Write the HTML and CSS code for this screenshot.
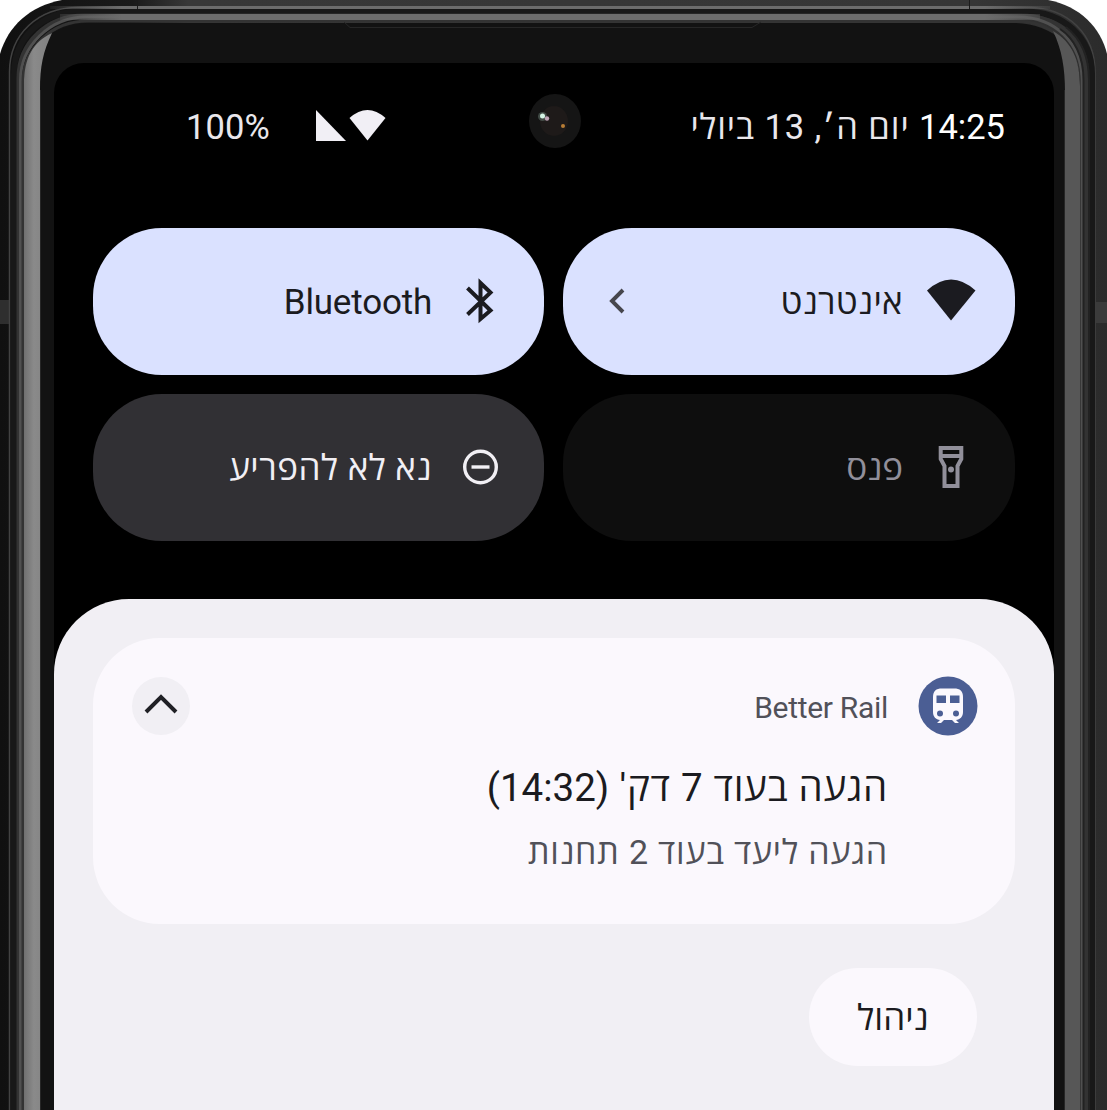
FILE: index.html
```html
<!DOCTYPE html>
<html lang="he" dir="rtl">
<head>
<meta charset="utf-8">
<title>Better Rail</title>
<link rel="stylesheet" href="styles.css">
</head>
<body>
<main class="phone">
  <svg class="frame" viewBox="0 0 1107 1110" aria-hidden="true">
    <defs>
      <linearGradient id="shineLeft" x1="0" x2="1" y1="0" y2="0"><stop offset="0" stop-color="#707070"/><stop offset=".35" stop-color="#8a8a8a"/><stop offset="1" stop-color="#808080"/></linearGradient>
      <linearGradient id="rim" x1="0" x2="1107" y1="0" y2="0" gradientUnits="userSpaceOnUse"><stop offset="0" stop-color="#101010"/><stop offset=".12" stop-color="#1a1a1a"/><stop offset=".17" stop-color="#383838"/><stop offset=".88" stop-color="#363636"/><stop offset="1" stop-color="#2b2b2b"/></linearGradient>
      <linearGradient id="edge" x1="40" x2="1067" y1="0" y2="0" gradientUnits="userSpaceOnUse"><stop offset="0" stop-color="#6c6c6c" stop-opacity="0"/><stop offset=".08" stop-color="#6c6c6c"/><stop offset=".92" stop-color="#6c6c6c"/><stop offset="1" stop-color="#6c6c6c" stop-opacity="0"/></linearGradient>
    </defs>
    <path d="M0 1110V54C8 26 30 6 62 0H1048C1080 6 1101 28 1107 54V1110Z" fill="url(#rim)"/>
    <path d="M0 300H10V324H0Z" fill="#2e2e2e"/><path d="M1096 302H1107V323H1096Z" fill="#3b3b3b"/>
    <g fill="none">
      <path d="M9.500 1110V72C9.500 34 38 7.500 78 7.500H1028C1068 7.500 1095 34 1095 72V1110" stroke="#424242" stroke-width="1.500"/>
      <path d="M14 1110V74C14 38 42 11.500 80 11.500H1024C1064 11.500 1092 38 1092 74V1110" stroke="#181818" stroke-width="6"/>
      <path d="M18.500 1110V78C18.500 42 48 15.500 84 15.500H1020C1060 15.500 1086 40 1086 78V1110" stroke="#333" stroke-width="4"/>
      <path d="M20.500 1110V80C20.500 46 50 17 86 17H1018C1056 17 1082 44 1082 80V1110" stroke="#505050" stroke-width="3"/>
      <path d="M23 1110V82C23 48 52 21 88 21H1016C1052 21 1079 48 1079 82V1110" stroke="#333" stroke-width="3"/>
      <path d="M1089 1110V80C1089 56 1080 38 1066 27M1083.500 1110V80C1083.500 56 1074 38 1060 29" stroke="#222" stroke-width="2"/>
    </g>
    <path d="M50 6H1050V9H50ZM60 14H1040V20H60Z" fill="url(#edge)"/>
    <path d="M24 1110V84C24 48 54 23 90 23H1014C1052 23 1080 48 1080 84V1110Z" fill="#121212"/>
    <path d="M24 1110V84C24 58 33 42 52 33C43 52 40 66 40 90V1110Z" fill="url(#shineLeft)"/>
    <path d="M1080 1110V86C1080 60 1072 42 1053 31C1062 50 1065 68 1065 92V1110Z" fill="#575757"/>
    <path d="M40.500 90V1110M1064.500 90V1110" stroke="#262626"/>
    <path d="M137.500 0V9M969.500 0V9" stroke="#1b1b1b"/>
    <path d="M344 22L350 27.500H752L761 22" fill="none" stroke="#262626"/>
  </svg>
  <section class="screen">
    <svg class="camera" viewBox="0 0 54 56" aria-hidden="true"><ellipse cx="27" cy="28" rx="26" ry="27" fill="#151515"/><ellipse cx="26" cy="28" rx="14" ry="15" fill="#1e1a19"/><circle cx="14.500" cy="23.500" r="4.500" fill="#697e73" opacity=".5"/><circle cx="14.500" cy="23" r="2.500" fill="#d5f5e5"/><circle cx="19" cy="25.500" r="2.200" fill="#bfa4b7"/><circle cx="35" cy="33" r="2" fill="#b77c35"/></svg>
    <header class="status">
      <span class="date"><span class="time">14:25</span> יום ה׳, 13 ביולי</span>
      <span class="indicators">
        <svg class="status-icons" viewBox="0 0 70 32" aria-hidden="true"><path d="M0 0V31H30Z" fill="#f1eff5"/><path d="M33.500 8Q51.500-8 69.500 8L51.500 30.500Z" fill="#f1eff5"/></svg>
        <span class="battery" dir="ltr">100%</span>
      </span>
    </header>
    <section class="tiles">
      <div class="tile active">
        <svg class="icon" viewBox="0 0 50 50"><path d="M1 15Q25-7 49.500 15L25 45Z" transform="translate(0 -.5)" fill="currentColor"/></svg>
        <span class="label internet">אינטרנט</span>
        <svg class="chevron" viewBox="0 0 16 26"><path d="M14 2L3 13L14 24" fill="none" stroke="#46464d" stroke-width="3.900"/></svg>
      </div>
      <div class="tile active">
        <svg class="icon" viewBox="0 0 50 50"><path d="M12.500 12L35.500 34.500L25.500 43V7L35.500 16.500L12.500 38.500" fill="none" stroke="currentColor" stroke-width="4"/></svg>
        <span class="label bluetooth">Bluetooth</span>
      </div>
      <div class="tile unavailable">
        <svg class="icon" viewBox="0 0 50 50"><path d="M14.700 6H35.300V17L31.500 24V44H18.500V24L14.700 17ZM14.700 14H35.300" fill="none" stroke="currentColor" stroke-width="4"/><circle cx="25" cy="27.500" r="3" fill="currentColor"/></svg>
        <span class="label torch">פנס</span>
      </div>
      <div class="tile inactive">
        <svg class="icon" viewBox="0 0 50 50"><circle cx="25.500" cy="25" r="15.800" fill="none" stroke="currentColor" stroke-width="3.400"/><path d="M16.500 25H34.500" stroke="currentColor" stroke-width="3.400"/></svg>
        <span class="label dnd">נא לא להפריע</span>
      </div>
    </section>
    <section class="sheet">
      <article class="card">
        <svg class="app-icon" viewBox="0 0 60 60" aria-hidden="true"><ellipse cx="30" cy="30" rx="29.500" ry="29.500" fill="#4b5e94"/><path d="M15 21C15 15 18 12.500 24 12.500H36C42 12.500 45 15 45 21V36C45 41 42 43.500 38 44L41 47H37L34 44H26L23 47H19L22 44C18 43.500 15 41 15 36Z" fill="#fbf8fd"/><path d="M18.500 19.500H28V27H18.500ZM32 19.500H41.500V27H32Z" fill="#4b5e94"/><circle cx="22" cy="37.500" r="3" fill="#4b5e94"/><circle cx="38" cy="37.500" r="3" fill="#4b5e94"/></svg>
        <div class="message">
          <span class="app" dir="ltr">Better Rail</span>
          <span class="title">הגעה בעוד 7 דק' <span class="arrival">(14:32)</span></span>
          <span class="detail">הגעה ליעד בעוד 2 תחנות</span>
        </div>
        <svg class="collapse" viewBox="0 0 58 58" aria-hidden="true"><circle cx="29" cy="29" r="29" fill="#f1eff4"/><path d="M14 35L29 20L44 35" fill="none" stroke="#202025" stroke-width="4"/></svg>
      </article>
      <button class="manage">ניהול</button>
    </section>
  </section>
</main>
</body>
</html>
```
FILE: styles.css
```css
* { box-sizing: border-box; }
body { margin: 0; background: #fff; }
.phone {
  position: relative;
  width: 1107px;
  height: 1110px;
  padding: 63px 53px 0 54px;
  overflow: hidden;
  direction: ltr;
  font-family: Roboto, "Open Sans", "Noto Sans", sans-serif;
}
.frame { position: absolute; inset: 0; width: 1107px; height: 1110px; }
.screen {
  position: relative;
  direction: rtl;
  width: 1000px;
  height: 1047px;
  overflow: hidden;
  background: #000;
  border-radius: 30px 30px 0 0;
}
.camera { position: absolute; left: 474px; top: 30px; width: 54px; height: 56px; }
.status {
  height: 165px;
  padding: 43px 49px 0 132px;
  display: flex;
  justify-content: space-between;
  align-items: flex-start;
  color: #e9e7ec;
  font-size: 34.5px;
  line-height: 42px;
  white-space: nowrap;
}
.date { letter-spacing: 0.9px; }
.time { color: #fff; letter-spacing: 0; }
.indicators { display: flex; gap: 46px; }
.battery { letter-spacing: 0.1px; }
.status-icons { width: 70px; height: 32px; margin-top: 4px; }
.tiles {
  display: grid;
  grid-template-columns: 452px 451px;
  gap: 19px;
  padding: 0 39px;
  height: 371px;
  grid-template-rows: 147px 147px;
}
.tile {
  display: flex;
  align-items: center;
  padding: 0 39px 0 46px;
  border-radius: 69px;
}
.active { background: #dae1ff; color: #1b1b20; }
.unavailable { background: #0e0e0e; color: #918f9a; }
.inactive { background: #313034; color: #f1eff4; }
.icon { width: 50px; height: 50px; flex: none; margin-bottom: 2px; }
.label { margin-right: 23px; padding-top: 3px; font-size: 35px; line-height: 44px; white-space: nowrap; }
.internet { letter-spacing: 0.3px; }
.bluetooth { letter-spacing: -0.2px; }
.dnd { letter-spacing: 0.5px; }
.chevron { width: 16px; height: 26px; margin: 0 auto 2px 0; }
.sheet {
  height: 520px;
  padding: 39px;
  background: #f1eff4;
  border-radius: 75px 75px 0 0;
}
.card {
  display: flex;
  height: 286px;
  padding: 38px 37px 0 39px;
  background: #fbf8fd;
  border-radius: 67px;
}
.app-icon { width: 60px; height: 60px; }
.message { display: flex; flex-direction: column; margin-right: 30px; white-space: nowrap; }
.app { font-size: 30px; line-height: 40px; margin-top: 12px; color: #515159; letter-spacing: -0.3px; text-align: right; }
.title { font-size: 38.5px; line-height: 50px; margin-top: 35px; color: #1b1b20; letter-spacing: 0.7px; }
.arrival { letter-spacing: 0; }
.detail { font-size: 34px; line-height: 44px; margin-top: 17px; color: #515159; letter-spacing: 0.8px; }
.collapse { width: 58px; height: 58px; margin: 1px auto 0 0; }
.manage {
  display: block;
  width: 168px;
  height: 98px;
  margin: 44px 38px 0 0;
  padding: 3px 0 0;
  border: 0;
  border-radius: 49px;
  background: #fbf8fd;
  color: #1b1b20;
  font: 35px/44px Roboto, "Open Sans", "Noto Sans", sans-serif;
}
```
